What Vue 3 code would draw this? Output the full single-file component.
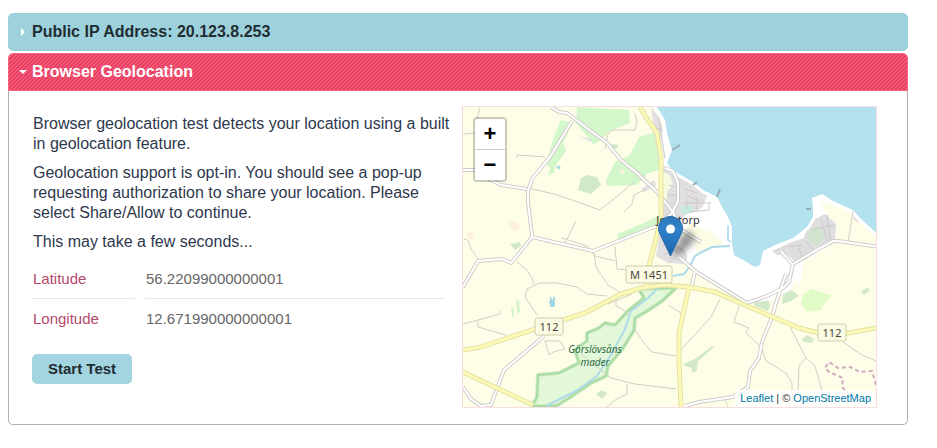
<script setup>
import { ref } from 'vue'

const ipAddress = '20.123.8.253'
const open = ref(true)
const busy = ref(false)

const coords = [
  { label: 'Latitude', value: '56.22099000000001' },
  { label: 'Longitude', value: '12.671990000000001' },
]

const shields = [
  { text: 'M 1451', x: 163, y: 159, w: 46 },
  { text: '112', x: 72, y: 211, w: 28 },
  { text: '112', x: 355, y: 217, w: 28 },
]

// white minor roads, drawn twice: grey casing, then the fill
const roads = [
  'M88 0l8 5 8 1 20 15 20 15 14 17 16 13 20 19 16 20 9 18 9 6 10 6',
  'M109 14L87 50l-18 22-4 12v12l4 32v2L54 149 48 156 39 152 15 154 0 180',
  'M0 63h12l16 10 10 5 26 4',
  'M69 130l61 14 66-26',
  'M0 280l8 12 10 7 10-1 13-35 26-22 14-12',
  'M202 61l8 3 5 12v18l-6 12-9 8',
  'M216 150l16 14 52 32 20-7 16-8 6-6 4-18 20-12 20-11h5l41 6',
  'M222 299l14-4 34-5 15-10 2-16 9-13 3-16 10-25 4-14 5-15 5-14',
  'M232 164l-3 14',
  'M330 158l-12-14',
]

const paths = [
  'M17 0l-5 20M0 27l12-1M54 51v-3l28 2',
  'M65 81l26 6 18 6 28 10 20-16 14-12',
  'M142 42l3-15 4-4h23l2-8-2-9',
  'M161 105l8-8 2-9 12-6M102 136l11-22',
  'M0 133l4-1M5 133l3 9 7 10M152 154l-20-5-8-10-25-8',
  'M54 155l10 8 6 10v4M74 208l-12-18 2-8 12-6h18l20 4 10 7 20 2',
  'M131 146l2 14 12 18 13 8M152 140l2 22 14 1M153 191v8l6 3 8 6',
  'M0 217l15-4 22-6v-3M15 214v6l28 8M82 234h15l5 8-12 3-4 3-4-14',
  'M171 221l10 15 8 9 24 4M118 247l30 24 24 6 41 5',
  'M164 277v10l-12 6-8 7M257 192l-9 18-33 36',
  'M276 199l-5 16 15 6-3 5 15 14 5 14 20 12 6 10v10',
  'M327 220l16 31 9 8 8 28M343 251l-7 8-1 24M380 235l17 12 16 7',
  'M205 198l13 8M390 104l-5 32M262 293l3 7M145 197l24-10',
]

const forests = [
  'M98 13l12 3-10 20 3 8-10 14-2 8-6 3 2-8-4-4 8-28z',
  'M114 0l52 3 1 13-20 8-8 8-8 6-18-22z',
  'M176 30l20-6 1 38-13 5-10 11-30 1-1-6 9-18 15-7 7-14z',
  'M155 127l41-18v9l-42 18z',
  'M198 97l8-2v10l-8 2z',
]

const woods = [
  'M118 71l6-3 10 2 4 8-10 9-13-4z',
  'M145 39l5-2 6 1-3 4-8-1z',
  'M47 137l10-2 1 4-6 4z',
  'M285 187l12-13 12-4 2 5-18 11z',
  'M290 195l15-4 2 8-2 5-13-5z',
  'M320 186l9-3 7 6-8 5-9 3z',
  'M339 232l6-4 6 4-2 4-9-1z',
  'M220 257l12-5 17-13 2 1-16 14-1 9-4 3-2-5-6-2z',
  'M398 184l8-4v4l-5 4z',
  'M133 287l6-4 5 3-5 6z',
]

const reserve =
  'M176 182l5 9-15 12-14 15-10-2-6 5-12 5v8l-12 9 4 13-20 10-21 2-1 22-5 9h24l13-8 22-15 15-7 2-10 15-18 11-18 1-12 12-7 15-10 14-13z'

const sea =
  'M194 -9v9l8 13 2 13 5 17-5 13 5 7 21 12 10 8 14 7 5 10 6 10 4 10v16l2 12 9 5 12 7 5-2 3-14 12-6 18-7 14-11 6-10v-9l-1-10 10-4 11 7 20 9 7 8 20 18V-9z'

function startTest() {
  busy.value = true
  setTimeout(() => {
    busy.value = false
  }, 1500)
}
</script>

<template>
  <main class="page">
    <h3 class="bar">
      <button type="button" class="bar-toggle">
        <svg class="arrow" viewBox="0 0 8 8"><path d="M2 0v8l4-4z" /></svg>
        Public IP Address: {{ ipAddress }}
      </button>
    </h3>
    <h3 class="bar active">
      <button type="button" class="bar-toggle" :aria-expanded="open" @click="open = !open">
        <svg class="arrow" viewBox="0 0 8 8"><path d="M0 2h8L4 6z" /></svg>
        Browser Geolocation
      </button>
    </h3>

    <section v-show="open" class="panel">
      <div class="info">
        <p>Browser geolocation test detects your location using a built in geolocation feature.</p>
        <p>
          Geolocation support is opt-in. You should see a pop-up requesting authorization to share
          your location. Please select Share/Allow to continue.
        </p>
        <p>This may take a few seconds...</p>
        <table class="coords">
          <tbody>
            <tr v-for="row in coords" :key="row.label">
              <th scope="row">{{ row.label }}</th>
              <td>{{ row.value }}</td>
            </tr>
          </tbody>
        </table>
        <button type="button" class="start" :disabled="busy" @click="startTest">Start Test</button>
      </div>

      <div class="map">
        <svg class="tiles" viewBox="0 0 413 300" preserveAspectRatio="xMidYMid slice">
          <defs>
            <linearGradient id="pin" x1="0" y1="0" x2="0" y2="1">
              <stop offset="0" stop-color="#2e77b8" />
              <stop offset="0.3" stop-color="#2f82cb" />
              <stop offset="1" stop-color="#1b65ab" />
            </linearGradient>
            <filter id="soft" x="-50%" y="-50%" width="200%" height="200%">
              <feGaussianBlur stdDeviation="3" />
            </filter>
          </defs>
          <rect width="413" height="300" fill="#fefee8" />

          <path v-for="d in forests" :key="d" :d="d" fill="#d3f7cb" />
          <path d="M340 188l9-6 12 4 8 2-8 10-3 5-14 2-6-8z" fill="#e0fbc6" />
          <path v-for="d in woods" :key="d" :d="d" fill="#d2e9c8" />
          <path d="M45 115l8-1 5 8-8 2zM4 124l8 2-2 6-6-1zM157 62l4 1v4l-4-1z" fill="#fdf0dc" />
          <path d="M53 192l3 1 1 12-3 2zM48 200l3 1v10l-2-1z" fill="#d9f3cd" />
          <path d="M93 60l3-2 2 3-2 2z" fill="#aedbe4" />

          <!-- built-up land and the pale shore -->
          <path d="M200 62l60 30 14 54-4 4 24 10 14-24 14 12 12 14-4 17-6 6-16 8-24 3-52-32-14-13-18-40z" fill="#fff" />
          <path d="M188 0l8 10 8 26-3 22 30 17 14 12-6 14-18 8-8 14v14l12 8-2 12-18-1-12-7 4-24v-60z" fill="#e2dfe1" />
          <path d="M204 0l2 60-8-2V30z" fill="#fff" />
          <path d="M199 64l8 5 3 8-6 8v8h-6z" fill="#f6fbe0" />
          <path d="M218 99h12v7h-12z" fill="#c8ebe0" />
          <path d="M226 116l24 10 12 11-18 3-10 7-12-6-6-10z" fill="#fcfce6" />
          <path d="M216 128l12 4 6 12-8 10z" fill="#fff" />
          <path d="M302 150l10-10 32-18 4-32 12-6 16 9 36 34v10l-36-3-35 20-4 22-16-6-8-14z" fill="#fff" />
          <path d="M357 94l14 4 16 8 3 4 12 6 11 11v16l-41-6-2-18z" fill="#fefee8" />
          <path d="M350 113l12-6 11 10-1 19-16 7-14 10-10 2-8-8-10 1-5-4 20-9 12-4 2-7z" fill="#dedddf" />
          <path d="M346 126l8-8 8 14-8 6-9-4z" fill="#cfe4ca" />
          <path d="M389 110l4-1 6 5-6 1z" fill="#ece0e2" />
          <path d="M178 82l13-9 2 6-12 6zM116 29l12 3v3z" fill="#e2dfe1" />
          <path
            d="M358 112l6 22M350 122l22-4M352 144l-10-10M364 108l4 30M335 138l4 12M325 140l14-2M206 78l6 2M205 88h10M206 96h8M222 88l14 6M220 96h28M222 82l12 4M224 92v10M234 90v14M200 138l16 8M200 148l14-6M246 96v7l-20 2M196 12l6 40M192 20l8 4"
            fill="none"
            stroke="#cdc8cc"
          />

          <path :d="sea" fill="#b3e1ee" stroke="#fff" stroke-width="6" stroke-linejoin="round" />
          <path :d="sea" fill="#b3e1ee" />
          <path d="M209 43l8-5M230 78l4-3M254 90l3-8M343 102h5" fill="none" stroke="#96adb8" stroke-width="2" />
          <path d="M265 118v15l3 2" fill="none" stroke="#b3e1ee" stroke-width="2" />
          <path d="M267 139l-18 1-8 4-9 5-5 10-6 8-11 2" fill="none" stroke="#a9dae8" stroke-width="2" />

          <path :d="reserve" fill="#e3f8d8" stroke="#cdebc2" stroke-width="4" stroke-linejoin="round" />
          <path :d="reserve" fill="none" stroke="#a9dba2" stroke-width="2" stroke-linejoin="round" />
          <path d="M194 182l-9 9-17 13-6 18-14 26-15 22-20 14-20 10-10 5" fill="none" stroke="#aedbea" stroke-width="2" />
          <path d="M88 192v7h2v-4zM91 190v9M86 195l6 2" fill="none" stroke="#a3d7e5" stroke-width="2" />

          <path v-for="d in paths" :key="d" :d="d" fill="none" stroke="#d0cfc4" />

          <g fill="none" stroke-linejoin="round">
            <path v-for="d in roads" :key="d" :d="d" stroke="#d0cdc9" stroke-width="4" />
            <path v-for="d in roads" :key="d" :d="d" stroke="#fff" stroke-width="2" />
          </g>

          <g fill="none" stroke-linejoin="round">
            <g v-for="(c, i) in ['#e4e1a6', '#fbf9b6']" :key="c" :stroke="c" :stroke-width="i ? 3 : 5">
              <path d="M177 0l6 10 11 16 4 24v60l-6 26-8 30v14" />
              <path d="M226 180l-10 46v30l2 44" />
              <path d="M0 265l70 33" />
              <path d="M0 243l18-3 54-18 50-16 36-19 20-6 22-3 26 2 26 5 34 15 50 21 24 6h20l33-6" />
            </g>
          </g>

          <path
            d="M413 278l-4-14-12 1-10-5-12 1-9-6-4 6 4 4 14 6-1 9 6 6v5"
            fill="none"
            stroke="#cfa7bf"
            stroke-width="2"
            stroke-dasharray="4 3"
          />

          <g v-for="s in shields" :key="s.x" class="shield">
            <rect :x="s.x" :y="s.y" :width="s.w" height="17" rx="2" />
            <text :x="s.x + s.w / 2" :y="s.y + 13">{{ s.text }}</text>
          </g>
          <text class="town" x="215" y="117">Jonstorp</text>
          <text class="nature" x="132" y="246">Görslövsåns</text>
          <text class="nature" x="132" y="259">mader</text>

          <path d="M209 150l9-22 10-4 4 10-10 10z" fill="#000" opacity="0.4" filter="url(#soft)" />
          <g transform="translate(195 109)">
            <path
              d="M12.5.5C5.9.5.5 5.9.5 12.5c0 2.4.7 4.3 2 6.7L12.5 40l10-20.8c1.300-2.400 2-4.300 2-6.700C24.500 5.900 19.100.5 12.500.5z"
              fill="url(#pin)"
              stroke="#2c6ea8"
            />
            <circle cx="12.500" cy="13" r="4.500" fill="#fff" />
          </g>
        </svg>

        <div class="zoom">
          <button type="button" aria-label="Zoom in">+</button>
          <button type="button" aria-label="Zoom out">−</button>
        </div>
        <div class="attribution">
          <a href="#">Leaflet</a> | © <a href="#">OpenStreetMap</a>
        </div>
      </div>
    </section>
  </main>
</template>

<style>
body {
  background: #fff;
}
</style>

<style scoped>
.page {
  padding: 13px 29px 23px 8px;
  font-family: 'Liberation Sans', Arial, sans-serif;
  font-size: 16px;
  line-height: 20px;
  color: #2e384d;
}
.bar {
  margin: 0 0 2px;
  font-size: 16px;
  border: 1px solid #9bcfd9;
  border-radius: 5px;
  background: linear-gradient(135deg, #99cfda 45%, #abd9e2 45% 55%, #99cfda 55%) 0 0 / 4px 4px;
  color: #1f2d33;
}
.bar.active {
  margin: 0;
  border-color: #f7647f;
  border-radius: 5px 5px 0 0;
  background: linear-gradient(135deg, #e94064 45%, #f56a85 45% 55%, #e94064 55%) 0 0 / 4px 4px;
  color: #fff;
}
.bar-toggle {
  display: flex;
  align-items: center;
  gap: 5px;
  width: 100%;
  padding: 8px 10px;
  border: 0;
  background: none;
  font: inherit;
  line-height: 20px;
  color: inherit;
  text-align: left;
  cursor: pointer;
}
.arrow {
  width: 8px;
  height: 8px;
  fill: #fff;
}
.panel {
  display: grid;
  grid-template-columns: 1fr 1fr;
  gap: 15px;
  padding: 15px 30px 16px 23px;
  border: 1px solid #b0b0b0;
  border-top: 0;
  border-radius: 0 0 5px 5px;
}
.info {
  padding-top: 8px;
}
.info p {
  margin: 0 -8px 9px 0;
  padding-left: 1px;
}
.coords {
  width: calc(100% + 18px);
  margin: -2px -10px 0;
  border-spacing: 10px 0;
  font-size: 15px;
}
.coords th,
.coords td {
  height: 39px;
  padding: 0 1px;
  border-bottom: 1px solid #f3e1e6;
  font-weight: normal;
  text-align: left;
}
.coords th {
  width: 101px;
  color: #b5486a;
}
.coords td {
  color: #666;
}
.coords tr:last-child > * {
  border-bottom-color: transparent;
}
.start {
  margin-top: 15px;
  padding: 5px 16px;
  border: 0;
  border-radius: 5px;
  background: linear-gradient(135deg, #9ed2df 45%, #afdbe5 45% 55%, #9ed2df 55%) 0 0 / 4px 4px;
  font: bold 15px/20px 'Liberation Sans', Arial, sans-serif;
  color: #1f2d33;
  cursor: pointer;
}
.map {
  position: relative;
  height: 300px;
  border: 1px solid #f5dde1;
  overflow: hidden;
}
.tiles {
  display: block;
  width: 100%;
  height: 100%;
}
.shield rect {
  fill: #fcfbe4;
  stroke: #d0ccaa;
}
.shield text {
  font: 11px 'Noto Sans', sans-serif;
  fill: #46453a;
  text-anchor: middle;
}
.town {
  font: 11px 'Noto Sans', sans-serif;
  fill: #333;
  text-anchor: middle;
}
.nature {
  font: italic 10px 'Noto Sans', sans-serif;
  fill: #2b6a45;
  text-anchor: middle;
}
.zoom {
  position: absolute;
  top: 10px;
  left: 10px;
  border: 2px solid rgba(0, 0, 0, 0.2);
  border-radius: 4px;
  background-clip: padding-box;
}
.zoom button {
  display: block;
  width: 30px;
  height: 30px;
  padding: 0;
  border: 0;
  border-radius: 0 0 2px 2px;
  background: #fff;
  font: bold 22px/30px 'Liberation Sans', Arial, sans-serif;
  color: #000;
  cursor: pointer;
}
.zoom button:first-child {
  height: 31px;
  border-bottom: 1px solid #ccc;
  border-radius: 2px 2px 0 0;
}
.attribution {
  position: absolute;
  right: 0;
  bottom: 0;
  padding: 0 5px;
  background: rgba(255, 255, 255, 0.8);
  font-size: 11px;
  line-height: 17px;
  color: #333;
}
.attribution a {
  color: #0078a8;
  text-decoration: none;
}
</style>
